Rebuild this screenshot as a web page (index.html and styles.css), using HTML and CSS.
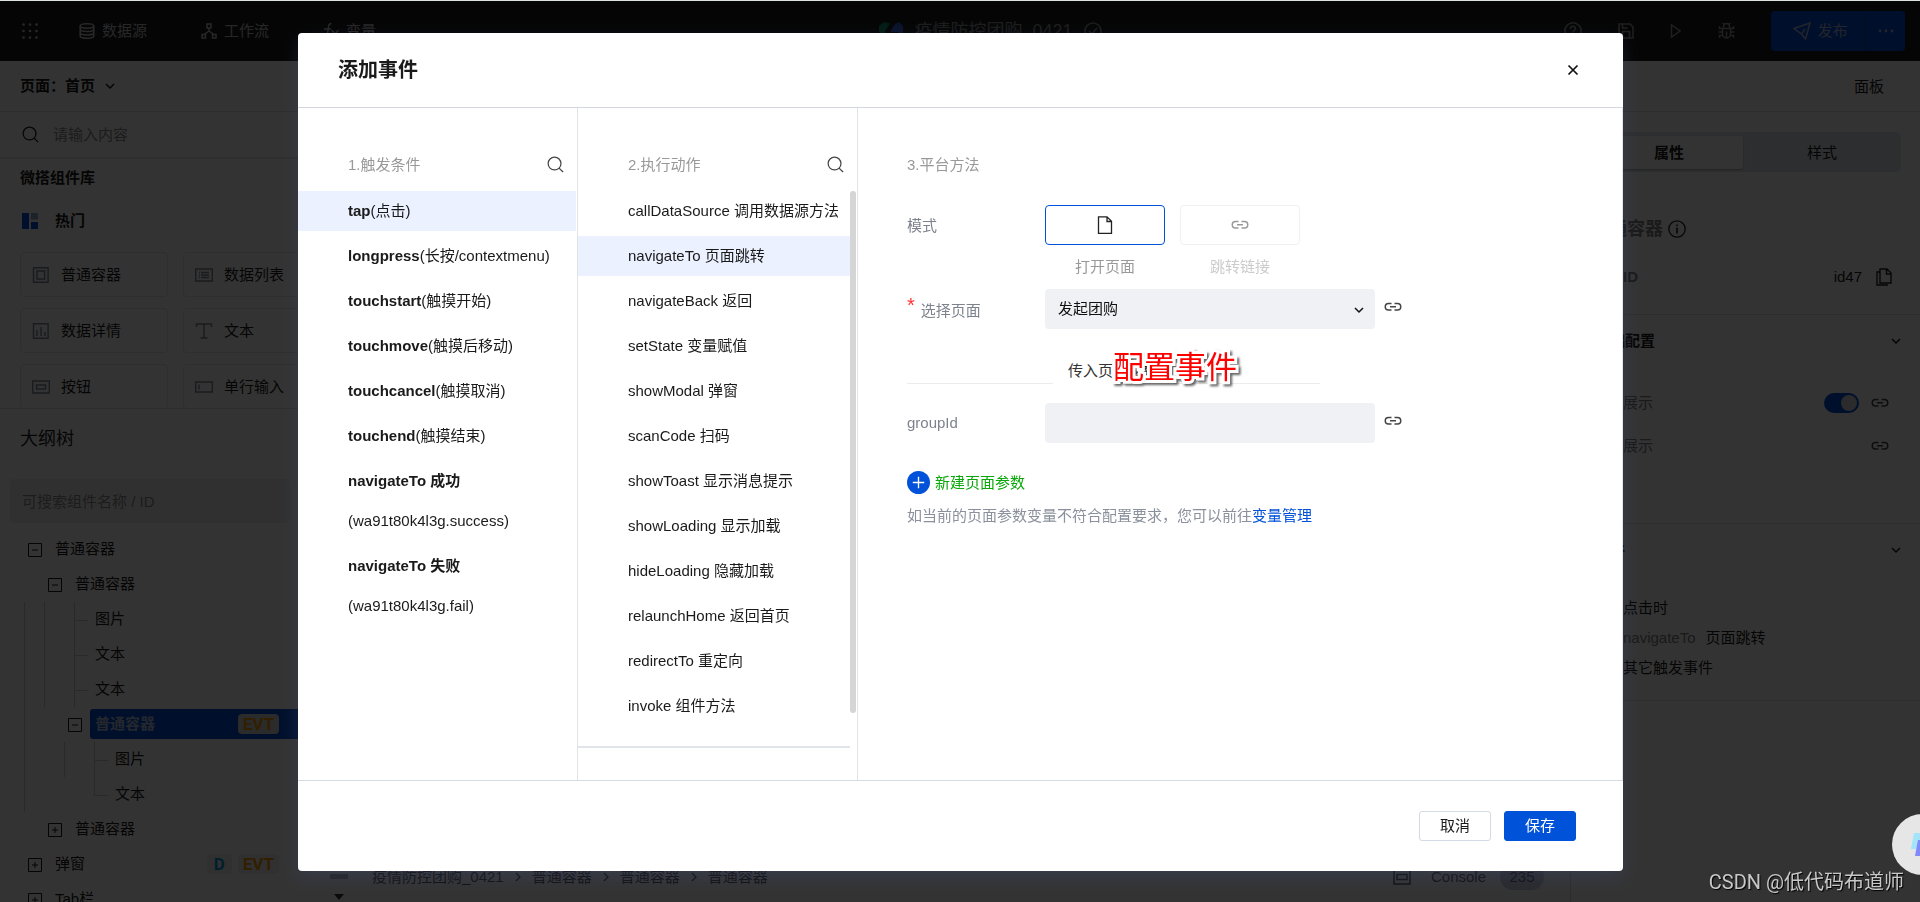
FILE: index.html
```html
<!DOCTYPE html>
<html lang="zh-CN">
<head>
<meta charset="utf-8">
<title>添加事件</title>
<link rel="stylesheet" href="styles.css">
</head>
<body>
<svg class="sprite" aria-hidden="true">
  <symbol id="i-link" viewBox="0 0 18 10"><path d="M7.500 1.500H4.500a3.200 3.200 0 0 0 0 6.500H7.500M10.500 1.500H13.500a3.200 3.200 0 0 1 0 6.500H10.500M6 4.750H12" fill="none" stroke="currentColor" stroke-width="1.500"/></symbol>
  <symbol id="i-chev" viewBox="0 0 10 8"><path d="M1 2l4 4 4-4" fill="none" stroke="currentColor" stroke-width="1.500"/></symbol>
  <symbol id="i-chevr" viewBox="0 0 8 10"><path d="M2 1l4 4-4 4" fill="none" stroke="currentColor" stroke-width="1.300"/></symbol>
  <symbol id="i-search" viewBox="0 0 18 18"><circle cx="8" cy="8" r="6.800" fill="none" stroke="currentColor" stroke-width="1.300"/><path d="M12.800 12.800L17 17" stroke="currentColor" stroke-width="1.300"/></symbol>
  <symbol id="i-minus" viewBox="0 0 14 14"><path d="M.5 .5h13v13H.5zM4 7h6" fill="none" stroke="currentColor"/></symbol>
  <symbol id="i-plus" viewBox="0 0 14 14"><path d="M.5 .5h13v13H.5zM4 7h6M7 4v6" fill="none" stroke="currentColor"/></symbol>
</svg>

<div class="app">
  <header class="topbar">
    <nav class="topnav">
      <button class="plain" aria-label="菜单"><svg width="16" height="16" viewBox="0 0 16 16" fill="currentColor"><circle cx="1.500" cy="1.500" r="1.300"/><circle cx="8" cy="1.500" r="1.300"/><circle cx="14.500" cy="1.500" r="1.300"/><circle cx="1.500" cy="8" r="1.300"/><circle cx="8" cy="8" r="1.300"/><circle cx="14.500" cy="8" r="1.300"/><circle cx="1.500" cy="14.500" r="1.300"/><circle cx="8" cy="14.500" r="1.300"/><circle cx="14.500" cy="14.500" r="1.300"/></svg></button>
      <a class="navitem" href="#"><svg width="16" height="16" viewBox="0 0 16 16" fill="none" stroke="currentColor" stroke-width="1.600"><ellipse cx="8" cy="3" rx="6.800" ry="2.200"/><path d="M1.200 3v10c0 3 13.600 3 13.600 0V3M1.200 6.300c0 3 13.600 3 13.600 0M1.200 9.700c0 3 13.600 3 13.600 0"/></svg>数据源</a>
      <a class="navitem" href="#"><svg width="16" height="16" viewBox="0 0 16 16" fill="none" stroke="currentColor" stroke-width="1.500"><path d="M6 1h4v4H6zM1 11.500h3.500V15H1zM11.500 11.500H15V15h-3.500zM8 5v3M8 8l-5 3.500M8 8l5 3.500"/></svg>工作流</a>
      <a class="navitem" href="#"><svg width="16" height="16" viewBox="0 0 16 16" fill="none" stroke="currentColor" stroke-width="1.400"><path d="M8.500 .8C5.500 0 5.500 3 5 7.500S3.500 15 1 14.500M1 6h7M8.500 7.500c3 0 3 7 6.500 7M15.500 7.500c-2 0-4 7-7.500 7"/></svg>变量</a>
    </nav>
    <div class="project">
      <svg width="24" height="20" viewBox="0 0 24 20"><path d="M0 11V5l5-4 6 1.500L6 10v6z" fill="#0b8a5c"/><path d="M11 11l5-8 4-2 4 4v12l-5-6z" fill="#2a5cc8"/></svg>
      <span>疫情防控团购_0421</span>
      <svg width="18" height="18" viewBox="0 0 18 18" fill="none" stroke="currentColor" stroke-width="1.500"><circle cx="9" cy="9" r="8"/><path d="M5 9l3 3 5-6"/></svg>
    </div>
    <div class="tools">
      <button class="plain" aria-label="帮助"><svg width="18" height="18" viewBox="0 0 18 18" fill="none" stroke="currentColor" stroke-width="1.500"><circle cx="9" cy="9" r="8.200"/><path d="M6.500 7c0-3.500 5-3.500 5-.5 0 2-2.500 2-2.500 4M9 12v1.500"/></svg></button>
      <button class="plain" aria-label="保存"><svg width="16" height="16" viewBox="0 0 16 16" fill="none" stroke="currentColor" stroke-width="1.600"><path d="M1 1h11l3 3v11H1zM4.500 15V8.500h7V15M4.500 1v4h5"/></svg></button>
      <button class="plain" aria-label="预览"><svg width="12" height="16" viewBox="0 0 12 16" fill="none" stroke="currentColor" stroke-width="1.500"><path d="M1.500 2v12L10 8z"/></svg></button>
      <button class="plain" aria-label="调试"><svg width="17" height="18" viewBox="0 0 17 18" fill="none" stroke="currentColor" stroke-width="1.500"><path d="M4.500 6.500h8v5.500a4 4 0 0 1-8 0zM5.500 6V4.500a3 3 0 0 1 6 0V6M8.500 9.500V16M.5 10h4M12.500 10h4M1.500 4v2.500h3M15.500 4v2.500h-3M1.500 16v-2.500h3M15.500 16v-2.500h-3M4.500 1l2 1.500M12.500 1l-2 1.500"/></svg></button>
      <div class="publish">
        <button class="publish-main"><svg width="18" height="18" viewBox="0 0 18 18" fill="none" stroke="currentColor" stroke-width="1.500"><path d="M1 6.500L17 1l-4.500 16-4-5zM8.500 12l3.500-5"/></svg>发布</button>
        <button class="publish-more" aria-label="更多"><svg width="16" height="4" viewBox="0 0 16 4" fill="currentColor"><circle cx="2" cy="2" r="1.400"/><circle cx="8" cy="2" r="1.400"/><circle cx="14" cy="2" r="1.400"/></svg></button>
      </div>
    </div>
  </header>

  <aside class="left">
    <button class="pagepick">页面：首页 <svg width="10" height="8"><use href="#i-chev"/></svg></button>
    <label class="libsearch"><svg width="17" height="17"><use href="#i-search"/></svg><input type="text" placeholder="请输入内容" aria-label="搜索组件"></label>
    <section class="library">
      <h2>微搭组件库</h2>
      <h3><svg width="16" height="16" viewBox="0 0 16 16"><path d="M0 0h7v16H0z" fill="#0052d9"/><path d="M9 0h7v6.500H9z" fill="#8fa5d2"/><path d="M9 9h7v7H9z" fill="#0052d9"/></svg>热门</h3>
      <div class="cards">
        <button class="card"><svg viewBox="0 0 18 16"><path d="M1.500 .7h14.600v14.600H1.500zM5 4h7.600v8H5z"/></svg>普通容器</button>
        <button class="card"><svg viewBox="0 0 18 16"><path d="M.7 2h16.600v12H.7zM4 5.500h1M6 5.500h8M4 8h1M6 8h8M4 10.500h1M6 10.500h8"/></svg>数据列表</button>
        <button class="card"><svg viewBox="0 0 18 16"><path d="M1.500 .7h14.600v14.600H1.500zM5 7v6M9 4v9M13 9v4"/></svg>数据详情</button>
        <button class="card"><svg viewBox="0 0 18 16"><path d="M1.500 4V1h15v3M9 1v14M5.500 15h7"/></svg>文本</button>
        <button class="card"><svg viewBox="0 0 18 16"><path d="M.7 2h16.600v12H.7zM4.500 6h9v4h-9z"/></svg>按钮</button>
        <button class="card"><svg viewBox="0 0 18 16"><path d="M.7 3h16.600v10H.7zM4 5.500v5"/></svg>单行输入</button>
      </div>
    </section>
    <section class="outline">
      <h2>大纲树</h2>
      <input class="treesearch" type="text" placeholder="可搜索组件名称 / ID" aria-label="搜索组件名称">
      <ul class="tree">
        <li><svg class="tog"><use href="#i-minus"/></svg><span class="lbl">普通容器</span></li>
        <li><i class="g"></i><svg class="tog"><use href="#i-minus"/></svg><span class="lbl">普通容器</span></li>
        <li><i class="g on"></i><i class="g on"></i><i class="leaf"></i><span class="lbl">图片</span></li>
        <li><i class="g on"></i><i class="g on"></i><i class="leaf"></i><span class="lbl">文本</span></li>
        <li><i class="g on"></i><i class="g on"></i><i class="leaf"></i><span class="lbl">文本</span></li>
        <li><i class="g on"></i><i class="g"></i><svg class="tog"><use href="#i-minus"/></svg><span class="lbl sel">普通容器<b class="tag evt">EVT</b></span></li>
        <li><i class="g on"></i><i class="g"></i><i class="g on"></i><i class="leaf"></i><span class="lbl">图片</span></li>
        <li><i class="g on"></i><i class="g"></i><i class="g"></i><i class="leaf last"></i><span class="lbl">文本</span></li>
        <li><i class="g"></i><svg class="tog"><use href="#i-plus"/></svg><span class="lbl">普通容器</span></li>
        <li><svg class="tog"><use href="#i-plus"/></svg><span class="lbl">弹窗<b class="tag d">D</b><b class="tag evt">EVT</b></span></li>
        <li><svg class="tog"><use href="#i-plus"/></svg><span class="lbl">Tab栏</span></li>
      </ul>
    </section>
    <svg class="gutter" width="18" height="28" viewBox="0 0 18 28" aria-hidden="true"><path d="M0 0h18v5H0z" fill="#b4b4b4"/><path d="M4 20h10l-5 6z" fill="#333"/></svg>
  </aside>

  <main class="canvas">
    <footer class="crumbs">
      <span>疫情防控团购_0421</span><svg width="8" height="10"><use href="#i-chevr"/></svg><span>普通容器</span><svg width="8" height="10"><use href="#i-chevr"/></svg><span>普通容器</span><svg width="8" height="10"><use href="#i-chevr"/></svg><span>普通容器</span>
      <button class="console"><svg width="18" height="16" viewBox="0 0 18 16" fill="none" stroke="currentColor" stroke-width="1.500"><path d="M1 1h16v14H1zM4 5.500h10v5H4z"/></svg>Console<span class="count">235</span></button>
    </footer>
  </main>

  <aside class="right">
    <div class="panelhead">面板</div>
    <div class="seg"><button class="on">属性</button><button>样式</button></div>
    <h2 class="compname">普通容器<svg width="18" height="18" viewBox="0 0 18 18" fill="none" stroke="#222" stroke-width="1.300"><circle cx="9" cy="9" r="8.200"/><path d="M9 7.500v6M9 4.500v1.500" stroke-width="1.600"/></svg></h2>
    <div class="prop idrow"><b>组件ID</b><span class="val">id47</span><svg width="16" height="18" viewBox="0 0 16 18" fill="none" stroke="#222" stroke-width="1.400"><path d="M4 1h7l4 4v10H4zM10.500 1v5H15M4 4H1v13h11"/></svg></div>
    <h3 class="sect">基础配置<svg width="10" height="8"><use href="#i-chev"/></svg></h3>
    <div class="prop"><span id="show">是否展示</span><input class="switch" type="checkbox" checked aria-labelledby="show"><svg class="lk"><use href="#i-link"/></svg></div>
    <div class="prop"><span>条件展示</span><svg class="lk end"><use href="#i-link"/></svg></div>
    <h3 class="sect events">事件<svg width="10" height="8"><use href="#i-chev"/></svg></h3>
    <ul class="evlist"><li>点击时</li><li><em>navigateTo</em>页面跳转</li><li>其它触发事件</li></ul>
  </aside>
</div>

<div class="overlay">
  <div class="modal" role="dialog" aria-labelledby="mtitle">
    <header class="mhead"><h1 id="mtitle">添加事件</h1><button class="plain" aria-label="关闭"><svg width="12" height="12" viewBox="0 0 12 12"><path d="M1.500 1.500l9 9M10.500 1.500l-9 9" stroke="#111" stroke-width="1.700"/></svg></button></header>
    <div class="mbody">
      <section class="col">
        <div class="colhead">1.触发条件<button class="plain" aria-label="搜索触发条件"><svg width="17" height="17"><use href="#i-search"/></svg></button></div>
        <ul class="list one">
          <li><button class="on"><b>tap</b>(点击)</button></li>
          <li><button><b>longpress</b>(长按/contextmenu)</button></li>
          <li><button><b>touchstart</b>(触摸开始)</button></li>
          <li><button><b>touchmove</b>(触摸后移动)</button></li>
          <li><button><b>touchcancel</b>(触摸取消)</button></li>
          <li><button><b>touchend</b>(触摸结束)</button></li>
          <li><button><b>navigateTo 成功</b><br>(wa91t80k4l3g.success)</button></li>
          <li><button><b>navigateTo 失败</b><br>(wa91t80k4l3g.fail)</button></li>
        </ul>
      </section>
      <section class="col">
        <div class="colhead">2.执行动作<button class="plain" aria-label="搜索执行动作"><svg width="17" height="17"><use href="#i-search"/></svg></button></div>
        <div class="scroller">
          <ul class="list two">
            <li><button>callDataSource 调用数据源方法</button></li>
            <li><button class="on">navigateTo 页面跳转</button></li>
            <li><button>navigateBack 返回</button></li>
            <li><button>setState 变量赋值</button></li>
            <li><button>showModal 弹窗</button></li>
            <li><button>scanCode 扫码</button></li>
            <li><button>showToast 显示消息提示</button></li>
            <li><button>showLoading 显示加载</button></li>
            <li><button>hideLoading 隐藏加载</button></li>
            <li><button>relaunchHome 返回首页</button></li>
            <li><button>redirectTo 重定向</button></li>
            <li><button>invoke 组件方法</button></li>
          </ul>
          <div class="thumb"></div>
        </div>
      </section>
      <section class="col form">
        <div class="colhead">3.平台方法</div>
        <div class="row mode">
          <span class="key">模式</span>
          <div class="opt"><button class="on" aria-labelledby="m1"><svg width="16" height="18" viewBox="0 0 16 18" fill="none" stroke="#222" stroke-width="1.300"><path d="M1.500 .8h8.500l4.500 4.500v12h-13zM10 .8v4.700h4.500"/></svg></button><span id="m1">打开页面</span></div>
          <div class="opt off"><button aria-labelledby="m2"><svg width="18" height="10"><use href="#i-link"/></svg></button><span id="m2">跳转链接</span></div>
        </div>
        <div class="row">
          <label class="key req" for="page"><span class="star">*</span>选择页面</label>
          <div class="selwrap"><select id="page"><option>发起团购</option></select><svg width="10" height="8"><use href="#i-chev"/></svg></div>
          <button class="plain bind" aria-label="绑定"><svg width="18" height="10"><use href="#i-link"/></svg></button>
        </div>
        <div class="divider"><span>传入页面参数</span><strong class="note">配置事件</strong></div>
        <div class="row">
          <label class="key" for="gid">groupId</label>
          <input id="gid" type="text">
          <button class="plain bind" aria-label="绑定"><svg width="18" height="10"><use href="#i-link"/></svg></button>
        </div>
        <button class="addparam"><svg width="23" height="23" viewBox="0 0 22 22"><circle cx="11" cy="11" r="11" fill="#0052d9"/><path d="M5.500 11h11M11 5.500v11" stroke="#fff" stroke-width="1.300"/></svg>新建页面参数</button>
        <p class="hint">如当前的页面参数变量不符合配置要求，您可以前往<a href="#">变量管理</a></p>
      </section>
    </div>
    <footer class="mfoot"><button>取消</button><button class="primary">保存</button></footer>
  </div>
</div>
<button class="helper" aria-label="助手"><svg width="34" height="28" viewBox="0 0 34 28"><path d="M4 2h12l-3 16H1z" fill="#a4e4fa"/><path d="M8 9h12l-3 16H5z" fill="#8088fa"/></svg></button>
<div class="watermark">CSDN @低代码布道师</div>
</body>
</html>
```

FILE: styles.css
```css
* { box-sizing: border-box; }
html, body { height: 100%; }
body {
  margin: 0;
  overflow: hidden;
  border-top: 1px solid #dde0e0;
  background: #fff;
  color: #1a1a1a;
  font: 15px/20px "Liberation Sans", "Noto Sans CJK SC", sans-serif;
}
button, input, select { font: inherit; color: inherit; margin: 0; }
button { cursor: pointer; }
h1, h2, h3, p, ul { margin: 0; padding: 0; font: inherit; }
ul { list-style: none; }
svg { flex: none; }
.sprite { position: absolute; width: 0; height: 0; }
.plain { display: flex; padding: 0; border: 0; background: none; }

.app {
  display: grid;
  grid-template: 60px minmax(0, 1fr) / 348px minmax(0, 1fr) 349px;
  height: 100%;
}
.topbar {
  grid-column: 1 / -1;
  display: grid;
  grid-template-columns: 1fr auto 1fr;
  align-items: center;
  padding: 0 15px 0 22px;
  background: #191919;
  color: #c4c4c4;
}
.topnav { display: flex; align-items: center; }
.navitem {
  display: flex;
  align-items: center;
  gap: 7px;
  margin-left: 54px;
  color: inherit;
  text-decoration: none;
}
.plain + .navitem { margin-left: 41px; }
.project { display: flex; align-items: center; gap: 11px; margin-left: 54px; font-size: 18px; line-height: 24px; color: #8a8a8a; }
.tools { display: flex; align-items: center; justify-content: flex-end; gap: 36px; color: #999; }
.publish { display: flex; height: 40px; border-radius: 4px; background: #0052d9; color: #a9b4d8; }
.publish button { display: flex; align-items: center; justify-content: center; gap: 6px; border: 0; background: none; }
.publish .publish-main { width: 94px; padding: 0 0 0 5px; }
.publish .publish-more { width: 40px; border-left: 1px solid #1a3d8f; }

.left { position: relative; display: flex; flex-direction: column; min-height: 0; overflow: hidden; }
.gutter { position: absolute; right: 0; bottom: 0; }
.pagepick {
  flex: none;
  display: flex;
  align-items: center;
  gap: 10px;
  height: 51px;
  padding: 0 20px;
  border: 0;
  border-bottom: 1px solid #dedede;
  background: none;
  font-weight: bold;
}
.libsearch {
  flex: none;
  display: flex;
  align-items: center;
  gap: 14px;
  height: 47px;
  padding: 0 22px;
  border-bottom: 2px solid #e4e4e4;
}
.libsearch input { width: 200px; border: 0; padding: 0; background: none; }
input::placeholder { color: #8c8c8c; opacity: 1; }
.library { flex: none; height: 250px; padding: 9px 17px 0 20px; overflow: hidden; border-bottom: 1px solid #dedede; }
.library h2 { font-weight: bold; }
.library h3 { display: flex; align-items: center; gap: 17px; margin: 23px 0 21px; padding-left: 2px; font-weight: bold; }
.cards { display: grid; grid-template-columns: 1fr 1fr; gap: 11px 15px; }
.card {
  display: flex;
  align-items: center;
  gap: 11px;
  height: 45px;
  padding: 0 11px;
  border: 1px solid #e4e4e4;
  border-radius: 4px;
  background: #fff;
}
.card svg { width: 18px; height: 16px; fill: none; stroke: #828896; stroke-width: 1.400; }
.outline h2 { padding: 18px 20px 0; font-size: 18px; line-height: 24px; }
.treesearch { display: block; width: 280px; height: 44px; margin: 28px 0 9px 10px; padding: 0 12px; border: 0; border-radius: 4px; background: #f0f1f4; }
.tree li { display: flex; align-items: stretch; height: 35px; padding-left: 24px; }
.g { flex: none; width: 20px; border-left: 1px solid transparent; }
.g.on { border-color: #ccc; }
.tog { width: 14px; height: 14px; margin: 11px 8px 0 4px; color: #1a1a1a; }
.leaf { flex: none; width: 14px; margin: 0 2px 0 10px; border-left: 1px solid #ccc; background: linear-gradient(#ccc, #ccc) 0 18px / 100% 1px no-repeat; }
.leaf.last { height: 19px; }
.lbl { flex: 1; display: flex; align-items: center; gap: 6px; height: 30px; margin: 2px 0; padding: 0 69px 0 5px; border-radius: 3px 0 0 3px; }
.lbl.sel { background: #0052d9; color: #b9c3e4; font-weight: bold; }
.tag { padding: 0 5px; border-radius: 4px; background: #f0f1f4; font: bold 17px/20px "Roboto", sans-serif; }
.tag:first-of-type { margin-left: auto; }
.evt { color: #f59a00; }
.sel .evt { background: #d4d4d4; }
.d { padding: 0 7px; color: #009adf; }

.canvas { display: flex; flex-direction: column; justify-content: flex-end; border-right: 1px solid #dcdcdc; }
.crumbs { display: flex; align-items: center; gap: 10px; height: 50px; padding-left: 24px; color: #555; }
.console { display: flex; align-items: center; gap: 14px; margin: 0 26px 0 auto; padding: 0; border: 0; background: none; }
.console svg { margin-right: 6px; }
.count { width: 44px; border-radius: 14px; background: #c9cedd; line-height: 26px; }

.right { min-width: 0; }
.panelhead { height: 51px; padding: 0 36px; border-bottom: 1px solid #dedede; text-align: right; line-height: 51px; }
.seg { display: flex; height: 40px; margin: 20px 19px 0 20px; padding: 4px 0 3px 4px; border-radius: 6px; background: #dfe3e8; }
.seg button { flex: 1; border: 0; border-radius: 3px; background: none; }
.seg .on { flex: none; width: 148px; background: #fff; font-weight: bold; box-shadow: 0 1px 2px #aaa; }
.compname { display: flex; align-items: center; gap: 5px; padding: 45px 20px 0; font-size: 18px; line-height: 24px; font-weight: bold; color: #808080; }
.prop { display: flex; align-items: center; height: 43px; padding: 0 31px 0 22px; color: #808080; }
.prop .lk { width: 18px; height: 10px; margin-left: 12px; color: #444; }
.prop .lk.end { margin-left: auto; }
.idrow { margin: 14px 0 16px; padding-right: 28px; }
.idrow svg { margin-left: 14px; }
.val { margin-left: auto; color: #222; }
.switch { appearance: none; display: flex; width: 35px; height: 20px; margin-left: auto; padding: 2px; border-radius: 10px; background: #0052d9; justify-content: flex-end; }
.switch::before { content: ""; width: 16px; height: 16px; border-radius: 8px; background: #d4d4d4; }
.sect { display: flex; align-items: center; justify-content: space-between; height: 67px; padding: 0 19px 14px 24px; border-top: 1px solid #e0e0e0; font-weight: bold; }
.events { margin-top: 56px; }
.evlist { padding: 3px 22px 17px; border-bottom: 1px solid #e0e0e0; line-height: 30px; }
.evlist li { padding-left: 30px; }
.evlist em { margin-right: 10px; font-style: normal; color: #808080; }

.overlay { position: fixed; inset: 1px 0 0; display: flex; align-items: flex-start; justify-content: center; padding: 32px 297px 0 298px; background: rgba(0, 0, 0, .8); }
.modal { flex: 1; min-width: 0; border-radius: 4px; background: #fff; box-shadow: 0 6px 18px rgba(70, 80, 130, .3); }
.mhead { display: flex; align-items: center; justify-content: space-between; height: 75px; padding: 0 44px 0 40px; border-bottom: 1px solid #d5d7de; }
.mhead h1 { font-size: 20px; line-height: 28px; font-weight: bold; }
.mbody { display: grid; grid-template-columns: 280px 280px minmax(0, 1fr); min-height: 672px; }
.col { border-right: 1px solid #e1e3e8; }
.colhead { display: flex; align-items: center; justify-content: space-between; height: 83px; padding: 30px 13px 0 50px; color: #999; }
.colhead .plain { color: #444; }
.list li { margin-bottom: 5px; }
.list button { display: block; width: 100%; padding: 0 0 0 50px; border: 0; background: none; text-align: left; line-height: 40px; white-space: nowrap; }
.list .on { background: #ebf1ff; }
.one { margin-right: 1px; }
.scroller { display: flex; }
.two { flex: 1; min-width: 0; padding-bottom: 15px; border-bottom: 2px solid #e1e4e8; }
.thumb { width: 6px; height: 522px; margin-right: 1px; border-radius: 3px; background: #d5d5d5; }

.form .colhead { padding-left: 0; }
.form { padding-left: 49px; }
.row { display: flex; align-items: center; color: #7d838e; }
.key { flex: none; width: 138px; }
.star { margin-right: 6px; color: #f33; font-size: 20px; line-height: 20px; vertical-align: 4px; }
.req { padding-bottom: 2px; }
.mode { align-items: flex-start; gap: 0 15px; margin: 14px 0 12px; }
.mode .key { width: 123px; line-height: 42px; }
.opt { display: flex; flex-direction: column; gap: 12px; width: 120px; text-align: center; color: #999; }
.opt button { display: flex; align-items: center; justify-content: center; height: 40px; border: 1px solid #0052d9; border-radius: 4px; background: #fff; }
.off { color: #ccc; }
.off button { border-color: #f0f0f0; color: #999; }
.selwrap { position: relative; width: 330px; }
.row select, .row input { display: block; width: 330px; height: 40px; padding: 0 13px; border: 0; border-radius: 4px; background: #f0f1f5; color: #111; appearance: none; }
.selwrap svg { position: absolute; right: 11px; top: 17px; color: #111; pointer-events: none; }
.bind { margin-left: 9px; padding-bottom: 4px; color: #444; }
.divider { position: relative; display: flex; width: 413px; height: 55px; margin-bottom: 19px; background: linear-gradient(#ececec, #ececec) 0 100% / 100% 1px no-repeat; }
.divider span { margin: 30px 0 0 146px; padding: 0 15px; background: #fff; line-height: 23px; color: #333; border-bottom: 2px solid #fff; }
.note {
  position: absolute;
  left: 206px;
  top: 19px;
  color: #fe0000;
  font-size: 31px;
  line-height: 40px;
  font-weight: normal;
  -webkit-text-stroke: 6px #fff;
  paint-order: stroke fill;
  filter: drop-shadow(2px 2px 1px rgba(0, 0, 0, .6));
}
.addparam { display: flex; align-items: center; gap: 5px; margin: 28px 0 0; padding: 0; border: 0; background: none; color: #0aa80a; }
.hint { margin-top: 12px; color: #8a919c; }
.hint a { color: #0052d9; text-decoration: none; }

.mfoot { display: flex; justify-content: flex-end; gap: 13px; padding: 30px 47px; border-top: 1px solid #d5d9e3; }
.mfoot button { width: 72px; height: 30px; padding: 0; border: 1px solid #d5d9e3; border-radius: 3px; background: #fff; }
.mfoot .primary { border-color: #0052d9; background: #0052d9; color: #fff; }

.helper { position: fixed; right: -33px; bottom: 27px; display: flex; align-items: center; width: 61px; height: 61px; padding: 0 0 0 18px; border: 0; border-radius: 50%; background: #e6e6e6; }
.watermark { position: fixed; right: 16px; bottom: 6px; color: #c8c8c8; font: 20px/28px "Roboto", "Noto Sans CJK SC", sans-serif; text-shadow: 1px 1px 1px #000; }
```
